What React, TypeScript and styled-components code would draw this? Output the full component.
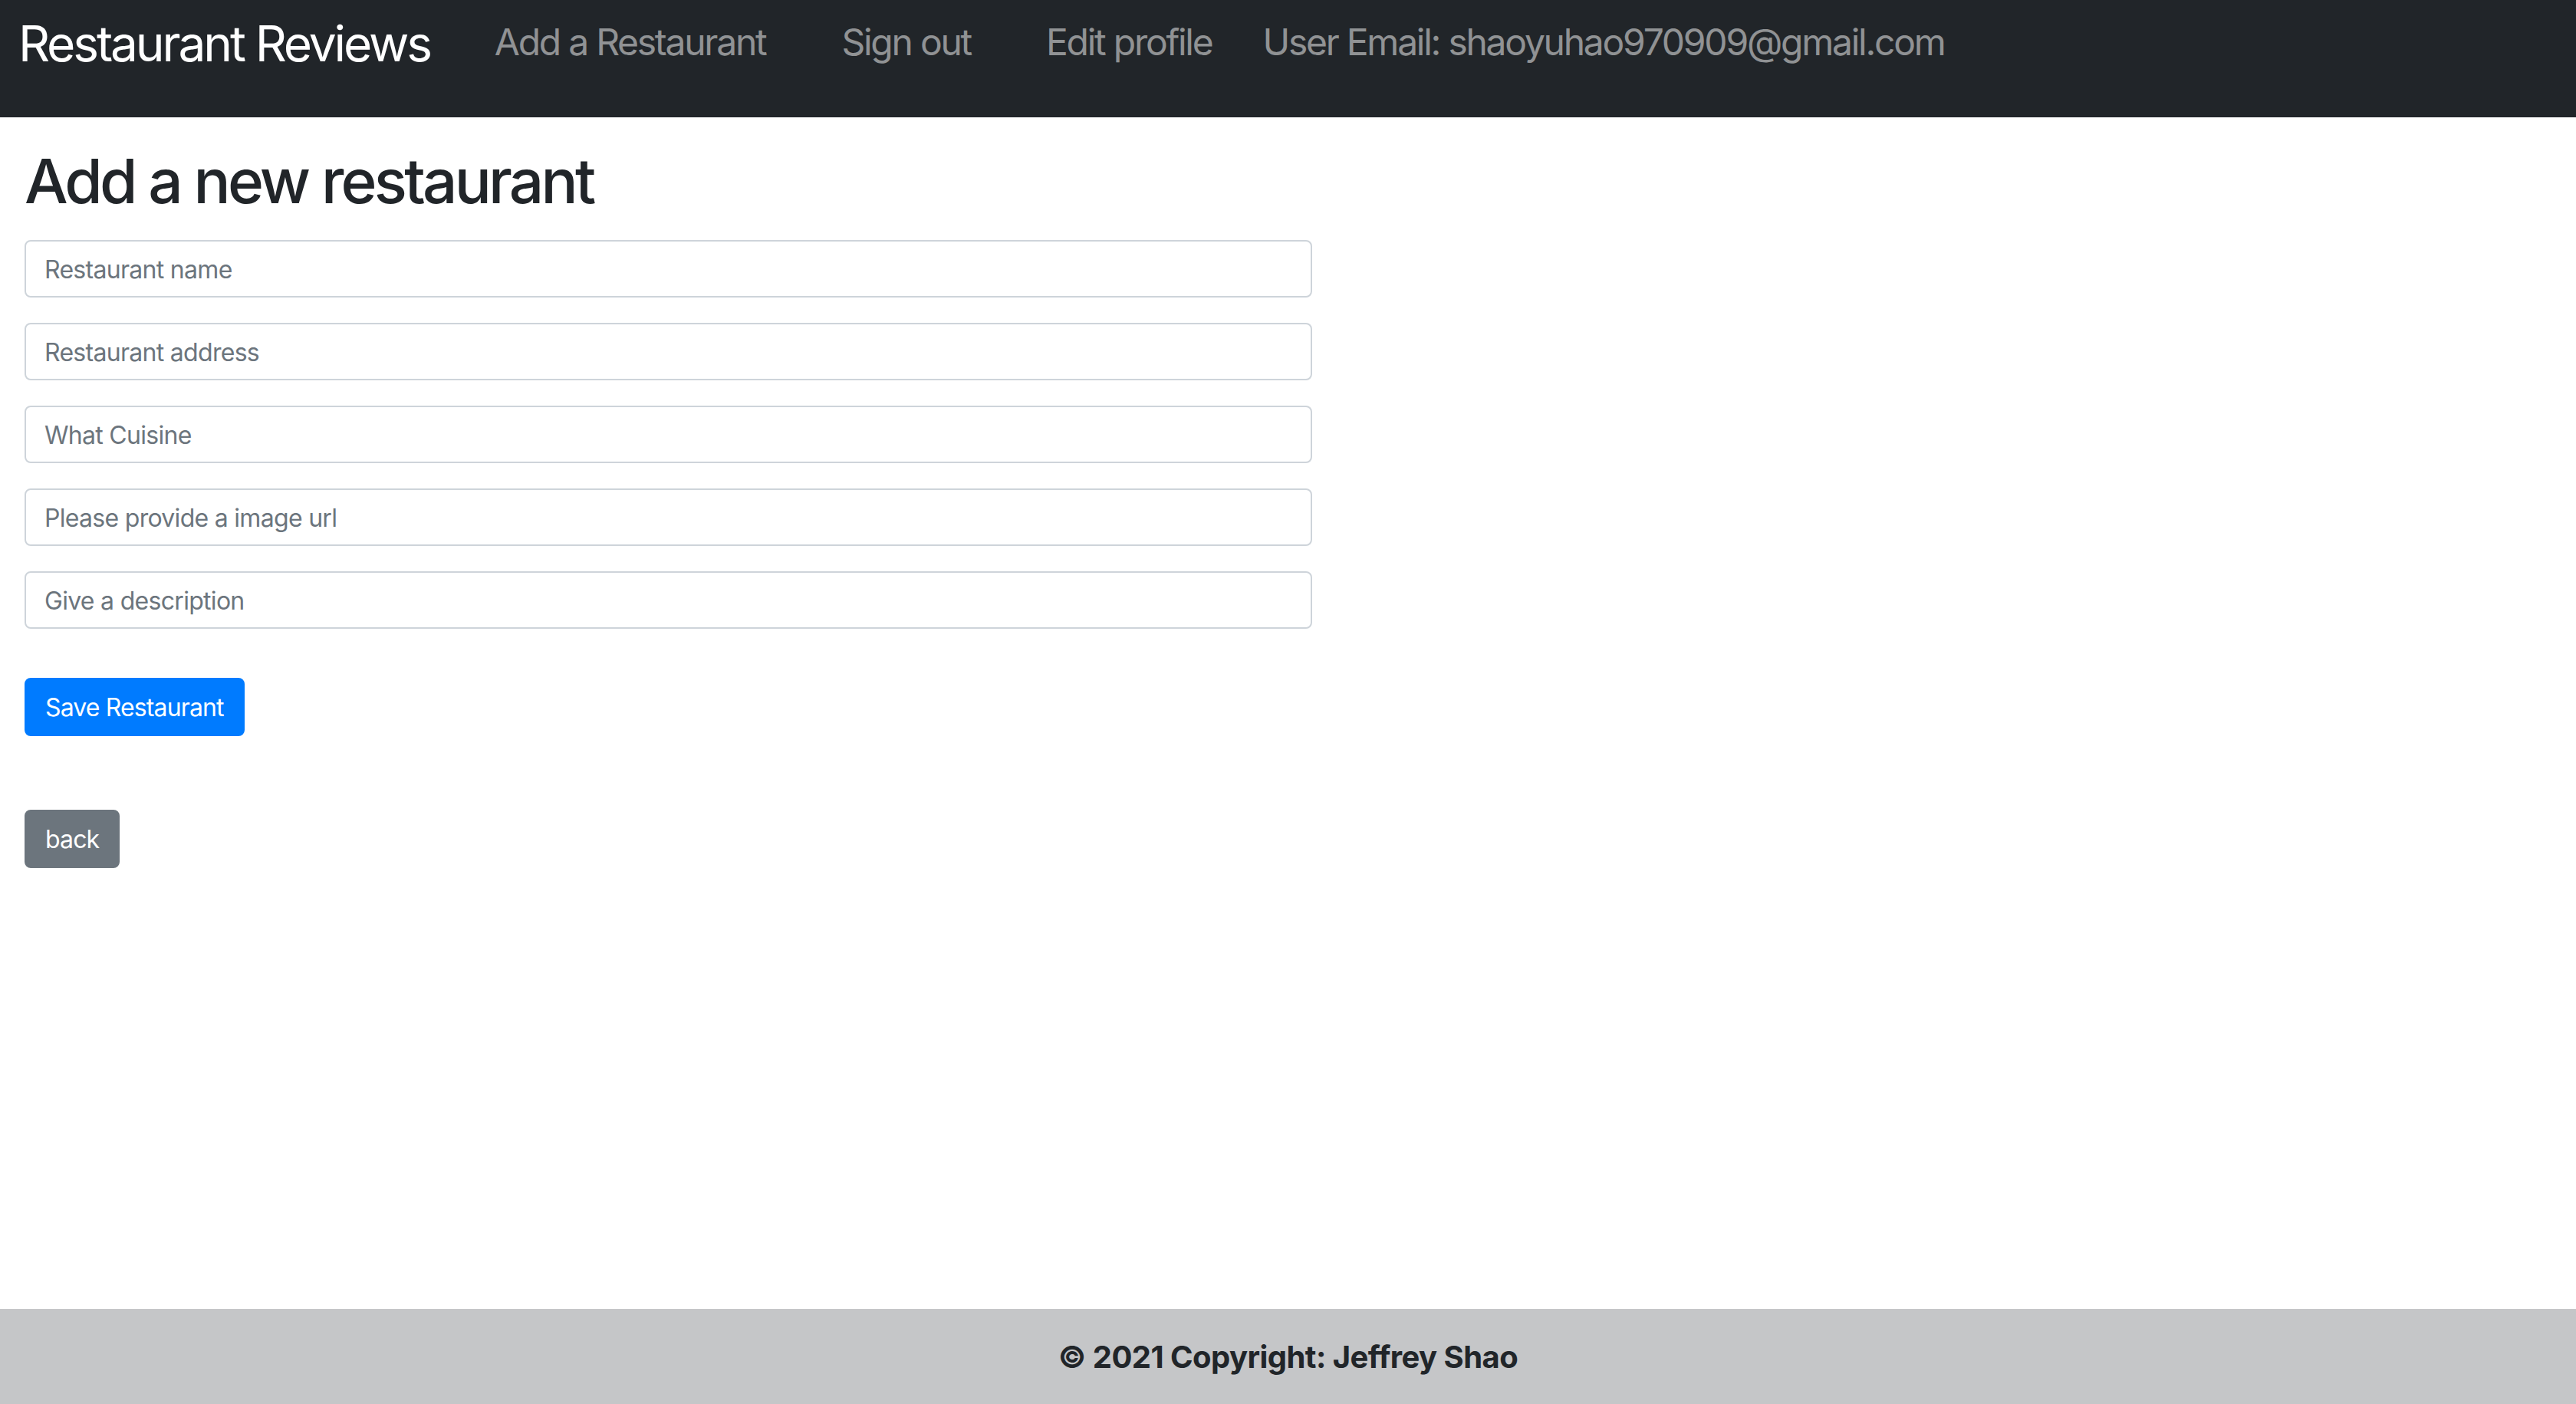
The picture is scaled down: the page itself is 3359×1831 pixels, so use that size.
import React from "react";
import styled, { createGlobalStyle } from "styled-components";

const GlobalStyle = createGlobalStyle`
  html, body {
    margin: 0;
    padding: 0;
    background: #ffffff;
  }
  body {
    font-family: Inter, "Liberation Sans", sans-serif;
    color: #212529;
  }
  * { box-sizing: border-box; }
`;

const Page = styled.div`
  min-height: 100vh;
  display: flex;
  flex-direction: column;
`;

const NavBar = styled.nav`
  height: 153px;
  background: #212529;
  display: flex;
  align-items: flex-start;
  padding: 25px 0 0 24px;
`;

const Brand = styled.a`
  font-size: 64px;
  line-height: 1;
  letter-spacing: -0.049em;
  color: #ffffff;
  text-decoration: none;
  white-space: nowrap;
`;

const NavLink = styled.a<{ $gap: number }>`
  margin-top: 6px;
  margin-left: ${(p) => p.$gap}px;
  font-size: 48px;
  line-height: 1;
  letter-spacing: -0.047em;
  color: rgba(255, 255, 255, 0.5);
  text-decoration: none;
  white-space: nowrap;
`;

const Main = styled.main`
  flex: 1;
  padding: 0 32px;
`;

const Title = styled.h1`
  margin: 43px 0 37px 0;
  font-size: 80px;
  font-weight: 500;
  line-height: 1;
  letter-spacing: -0.047em;
  color: #212529;
`;

const Form = styled.form`
  width: 1679px;
  display: flex;
  flex-direction: column;
  gap: 33px;
`;

const Input = styled.input`
  height: 75px;
  width: 100%;
  border: 2px solid #ced4da;
  border-radius: 8px;
  padding: 2px 24px 0;
  font-family: Inter, "Liberation Sans", sans-serif;
  font-size: 32px;
  letter-spacing: -0.022em;
  color: #495057;
  background: #ffffff;
  &::placeholder {
    color: #6c757d;
  }
`;

const Button = styled.button<{ $variant: "primary" | "secondary"; $top: number }>`
  align-self: flex-start;
  margin-top: ${(p) => p.$top}px;
  height: 76px;
  padding: 2px 25px 0;
  border: 2px solid ${(p) => (p.$variant === "primary" ? "#007bff" : "#6c757d")};
  border-radius: 8px;
  background: ${(p) => (p.$variant === "primary" ? "#007bff" : "#6c757d")};
  color: #ffffff;
  font-family: Inter, "Liberation Sans", sans-serif;
  font-size: 32px;
  font-weight: 400;
  letter-spacing: -0.027em;
  line-height: 1;
  cursor: pointer;
`;

const Actions = styled.div`
  display: flex;
  flex-direction: column;
`;

const Footer = styled.footer`
  height: 124px;
  background: #c5c6c8;
  display: flex;
  align-items: center;
  justify-content: center;
  font-size: 40px;
  font-weight: 700;
  letter-spacing: -0.014em;
  color: #212529;
`;

export default function App() {
  return (
    <Page>
      <GlobalStyle />
      <NavBar>
        <Brand href="#">Restaurant Reviews</Brand>
        <NavLink $gap={84} href="#">Add a Restaurant</NavLink>
        <NavLink $gap={99} href="#">Sign out</NavLink>
        <NavLink $gap={98} href="#">Edit profile</NavLink>
        <NavLink $gap={66} as="span">User Email: shaoyuhao970909@gmail.com</NavLink>
      </NavBar>
      <Main>
        <Title>Add a new restaurant</Title>
        <Form onSubmit={(e) => e.preventDefault()}>
          <Input placeholder="Restaurant name" />
          <Input placeholder="Restaurant address" />
          <Input placeholder="What Cuisine" />
          <Input placeholder="Please provide a image url" />
          <Input placeholder="Give a description" />
        </Form>
        <Actions>
          <Button $variant="primary" $top={64} type="button">Save Restaurant</Button>
          <Button $variant="secondary" $top={96} type="button">back</Button>
        </Actions>
      </Main>
      <Footer>© 2021 Copyright: Jeffrey Shao</Footer>
    </Page>
  );
}
